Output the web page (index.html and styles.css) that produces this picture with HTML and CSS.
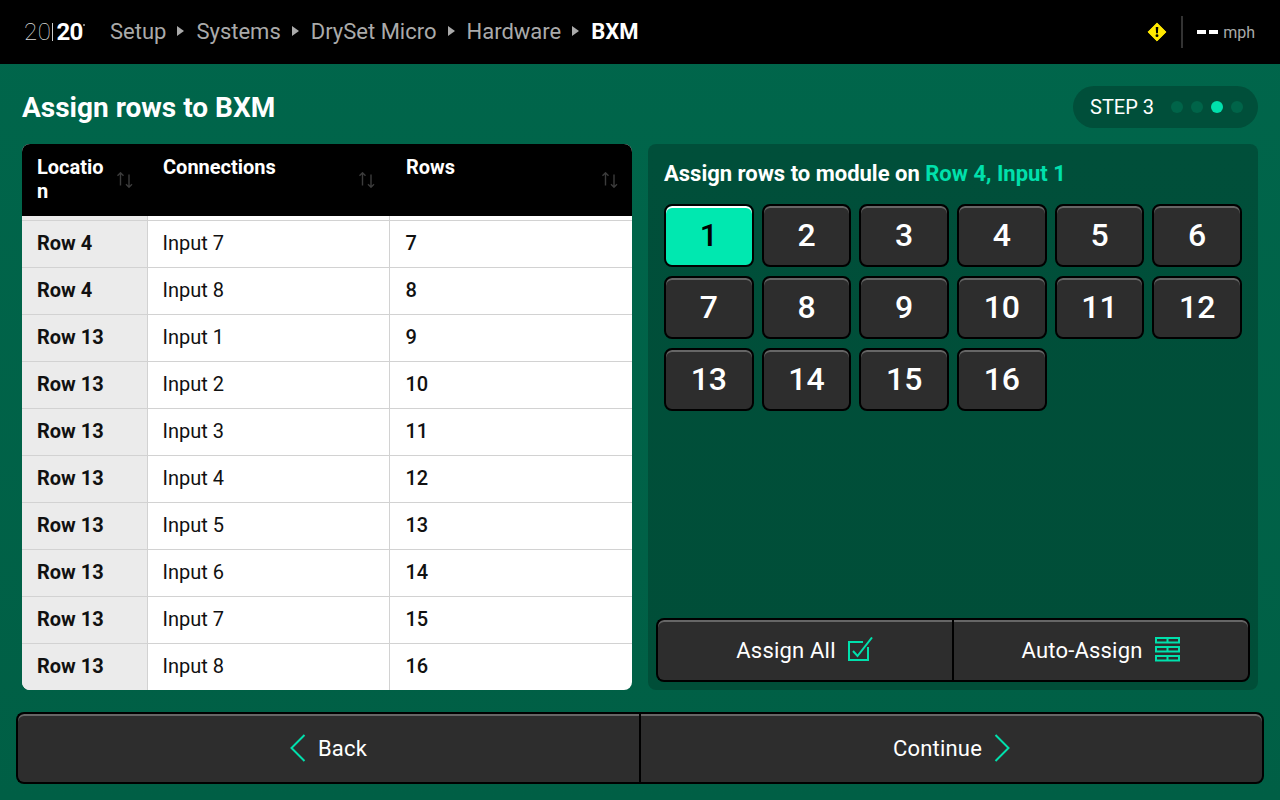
FILE: index.html
```html
<!DOCTYPE html>
<html lang="en">
<head>
  <meta charset="UTF-8">
  <meta name="viewport" content="width=device-width, initial-scale=1.0">
  <title>Assign rows to BXM</title>
  <link rel="stylesheet" href="styles.css">
</head>
<body>
<header class="topbar">
  <div class="logo"><span class="logo-thin">20</span><span class="logo-bar"></span><span class="logo-bold">20</span><span class="logo-mark"></span></div>
  <nav class="crumbs">
    <span>Setup</span><i class="crumb-arrow"></i>
    <span>Systems</span><i class="crumb-arrow"></i>
    <span>DrySet Micro</span><i class="crumb-arrow"></i>
    <span>Hardware</span><i class="crumb-arrow"></i>
    <span class="crumb-current">BXM</span>
  </nav>
  <div class="status">
    <svg class="warn" width="20" height="20" viewBox="0 0 22 22">
      <path d="M11 1 L21 11 L11 21 L1 11 Z" fill="#ffe800" stroke="#ffe800" stroke-width="1" stroke-linejoin="round"/>
      <path d="M9.6 5.5 H12.4 L12 12.5 H10 Z" fill="#000"/>
      <circle cx="11" cy="15" r="1.6" fill="#000"/>
    </svg>
    <span class="status-divider"></span>
    <span class="speed-dash"></span><span class="speed-dash"></span>
    <span class="speed-unit">mph</span>
  </div>
</header>

<main class="content">
  <div class="title-row">
    <h1>Assign rows to BXM</h1>
    <div class="step">
      <span class="step-label">STEP 3</span>
      <span class="dot"></span><span class="dot"></span><span class="dot dot-on"></span><span class="dot"></span>
    </div>
  </div>

  <div class="panels">
    <section class="table-card">
      <table class="rows-table">
        <thead>
          <tr>
            <th><div class="th-inner"><span class="th-loc">Location</span><svg class="sort" width="16" height="16" viewBox="0 0 16 16"><path d="M3.5 13.5 V0.8 M0.5 3.8 L3.5 0.8 L6.5 3.8 M12 2.5 V15.2 M9 12.2 L12 15.2 L15 12.2" fill="none" stroke="#3c3c3c" stroke-width="1.4"/></svg></div></th>
            <th><div class="th-inner"><span>Connections</span><svg class="sort" width="16" height="16" viewBox="0 0 16 16"><path d="M3.5 13.5 V0.8 M0.5 3.8 L3.5 0.8 L6.5 3.8 M12 2.5 V15.2 M9 12.2 L12 15.2 L15 12.2" fill="none" stroke="#3c3c3c" stroke-width="1.4"/></svg></div></th>
            <th><div class="th-inner"><span>Rows</span><svg class="sort" width="16" height="16" viewBox="0 0 16 16"><path d="M3.5 13.5 V0.8 M0.5 3.8 L3.5 0.8 L6.5 3.8 M12 2.5 V15.2 M9 12.2 L12 15.2 L15 12.2" fill="none" stroke="#3c3c3c" stroke-width="1.4"/></svg></div></th>
          </tr>
        </thead>
        <tbody>
          <tr class="spacer"><td></td><td></td><td></td></tr>
          <tr><td>Row 4</td><td>Input 7</td><td>7</td></tr>
          <tr><td>Row 4</td><td>Input 8</td><td>8</td></tr>
          <tr><td>Row 13</td><td>Input 1</td><td>9</td></tr>
          <tr><td>Row 13</td><td>Input 2</td><td>10</td></tr>
          <tr><td>Row 13</td><td>Input 3</td><td>11</td></tr>
          <tr><td>Row 13</td><td>Input 4</td><td>12</td></tr>
          <tr><td>Row 13</td><td>Input 5</td><td>13</td></tr>
          <tr><td>Row 13</td><td>Input 6</td><td>14</td></tr>
          <tr><td>Row 13</td><td>Input 7</td><td>15</td></tr>
          <tr><td>Row 13</td><td>Input 8</td><td>16</td></tr>
        </tbody>
      </table>
    </section>

    <section class="assign-card">
      <h2>Assign rows to module on <span class="accent">Row 4, Input 1</span></h2>
      <div class="num-grid">
        <button class="btn num num-on">1</button>
        <button class="btn num">2</button>
        <button class="btn num">3</button>
        <button class="btn num">4</button>
        <button class="btn num">5</button>
        <button class="btn num">6</button>
        <button class="btn num">7</button>
        <button class="btn num">8</button>
        <button class="btn num">9</button>
        <button class="btn num">10</button>
        <button class="btn num">11</button>
        <button class="btn num">12</button>
        <button class="btn num">13</button>
        <button class="btn num">14</button>
        <button class="btn num">15</button>
        <button class="btn num">16</button>
      </div>
      <div class="btn-group assign-actions">
        <button class="btn">Assign All
          <svg width="26" height="26" viewBox="0 0 26 26"><path d="M20 10 V23 H1 V5 H15" fill="none" stroke="#00e0ac" stroke-width="2"/><path d="M5 14 L9.5 19 L24 0.5" fill="none" stroke="#00e0ac" stroke-width="2"/></svg>
        </button>
        <button class="btn">Auto-Assign
          <svg width="26" height="26" viewBox="0 0 26 26"><g fill="none" stroke="#00e0ac" stroke-width="2"><rect x="1" y="1" width="23" height="4.5"/><rect x="1" y="10" width="23" height="4.5"/><rect x="1" y="19" width="23" height="4.5"/><path d="M12.5 1 V5.5 M12.5 10 V14.5 M12.5 19 V23.5"/></g></svg>
        </button>
      </div>
    </section>
  </div>

  <div class="btn-group footer-actions">
    <button class="btn">
      <svg width="16" height="28" viewBox="0 0 16 28"><path d="M14.5 1 L1.5 14 L14.5 27" fill="none" stroke="#00e0ac" stroke-width="2"/></svg>
      Back
    </button>
    <button class="btn">
      Continue
      <svg width="16" height="28" viewBox="0 0 16 28"><path d="M1.5 1 L14.5 14 L1.5 27" fill="none" stroke="#00e0ac" stroke-width="2"/></svg>
    </button>
  </div>
</main>
</body>
</html>
```
FILE: styles.css
```css
* {
  box-sizing: border-box;
}

html, body {
  margin: 0;
  height: 100%;
}

body {
  width: 1280px;
  height: 800px;
  overflow: hidden;
  font-family: Roboto, "Liberation Sans", sans-serif;
  background: linear-gradient(#00664b, #005f45);
  color: #fff;
}

/* Top bar */
.topbar {
  height: 64px;
  background: #000;
  display: flex;
  align-items: center;
  padding: 0 24px;
}

.logo {
  display: flex;
  align-items: center;
  font-size: 24px;
  width: 86px;
  color: #ddd;
}

.logo-thin {
  font-weight: 100;
  letter-spacing: 0.6px;
}

.logo-bar {
  width: 1px;
  height: 18px;
  margin: 0 3px 0 1px;
  background: #ccc;
}

.logo-bold {
  font-weight: 700;
  letter-spacing: -0.8px;
  color: #fff;
}

.logo-mark {
  width: 2px;
  height: 2px;
  margin: -14px 0 0 1px;
  background: #aaa;
  border-radius: 50%;
}

.crumbs {
  display: flex;
  align-items: center;
  margin-top: -2px;
  font-size: 22px;
  color: #aaa;
}

.crumb-arrow {
  width: 0;
  height: 0;
  margin: 0 12px 0 11px;
  border-left: 7px solid #aaa;
  border-top: 5px solid transparent;
  border-bottom: 5px solid transparent;
}

.crumb-current {
  font-weight: 700;
  color: #fff;
}

.status {
  margin-left: auto;
  display: flex;
  align-items: center;
}

.warn {
  margin-right: 14px;
}

.status-divider {
  width: 2px;
  height: 32px;
  margin-right: 14px;
  background: #333;
}

.speed-dash {
  width: 9px;
  height: 4px;
  margin-right: 3px;
  background: #fff;
}

.speed-unit {
  margin: 0 1px 0 2px;
  font-size: 16px;
  color: #aaa;
}

/* Main */
.content {
  height: 736px;
  display: flex;
  flex-direction: column;
  padding: 0 16px 16px;
}

.title-row {
  height: 80px;
  padding: 6px 6px 0;
  display: flex;
  align-items: center;
  justify-content: space-between;
}

h1 {
  margin: 0;
  font-size: 28px;
  font-weight: 700;
}

.step {
  height: 42px;
  display: flex;
  align-items: center;
  gap: 8px;
  padding: 0 15px 0 17px;
  border-radius: 21px;
  background: #004f3a;
}

.step-label {
  margin-right: 9px;
  font-size: 20px;
}

.dot {
  width: 12px;
  height: 12px;
  border-radius: 50%;
  background: #006449;
}

.dot-on {
  background: #00e0ac;
}

.panels {
  height: 546px;
  padding: 0 6px;
  display: grid;
  grid-template-columns: 610px 610px;
  gap: 16px;
}

/* Table */
.table-card {
  border-radius: 8px;
  overflow: hidden;
  background: #fff;
}

.rows-table {
  width: 610px;
  table-layout: fixed;
  border-collapse: collapse;
  color: #111;
  font-size: 20px;
}

.rows-table th:nth-child(1) { width: 125px; }
.rows-table th:nth-child(2) { width: 242px; }

.rows-table th {
  height: 72px;
  padding: 0;
  background: #000;
  color: #fff;
  font-weight: 700;
  font-size: 20px;
  text-align: left;
  vertical-align: top;
}

.th-inner {
  display: flex;
  justify-content: space-between;
  height: 72px;
  padding: 11px 14px 0 15px;
  line-height: 24px;
}

.rows-table th:nth-child(2) .th-inner {
  padding-left: 16px;
}

.rows-table th:nth-child(3) .th-inner {
  padding-left: 17px;
}

.th-loc {
  width: 70px;
  word-break: break-all;
}

.sort {
  margin-top: 17px;
  flex: none;
}

.rows-table td {
  height: 47px;
  padding: 0 15px 1px;
  border-left: 1px solid #d2d2d2;
  border-bottom: 1px solid #d2d2d2;
}

.rows-table td:first-child {
  border-left: 0;
  background: #ebebeb;
  font-weight: 700;
}

.rows-table td:last-child {
  padding-left: 16px;
  font-weight: 500;
}

.rows-table tr:last-child td {
  border-bottom: 0;
}

.rows-table .spacer td {
  height: 4px;
  padding: 0;
}

/* Assign panel */
.assign-card {
  border-radius: 8px;
  padding: 16px 16px 8px;
  display: flex;
  flex-direction: column;
  background: linear-gradient(#004f3a, #004e38);
}

h2 {
  margin: 0 0 16px;
  font-size: 22px;
  line-height: 28px;
  font-weight: 700;
}

.accent {
  color: #00e0ac;
}

.btn {
  border: 2px solid #000;
  border-radius: 8px;
  background: #2d2d2d;
  box-shadow: inset 0 2px 0 #666;
  color: #fff;
  font-family: inherit;
  display: flex;
  align-items: center;
  justify-content: center;
  padding: 0;
}

.num-grid {
  display: grid;
  grid-template-columns: repeat(6, 1fr);
  grid-auto-rows: 63px;
  gap: 9px 8px;
}

.num {
  padding-bottom: 2px;
  font-size: 32px;
  font-weight: 500;
}

.num-on {
  background: #00e8b0;
  box-shadow: inset 0 2px 0 #fff;
  color: #000;
}

.btn-group {
  display: flex;
}

.btn-group .btn {
  flex: 1;
  gap: 12px;
  font-size: 22px;
  font-weight: 400;
  letter-spacing: 0.2px;
}

.btn-group .btn:first-child {
  border-right: 0;
  border-radius: 8px 0 0 8px;
}

.btn-group .btn:last-child {
  border-radius: 0 8px 8px 0;
}

.assign-actions {
  height: 64px;
  margin: auto -8px 0;
}

.footer-actions {
  height: 72px;
  margin-top: 22px;
}
```
